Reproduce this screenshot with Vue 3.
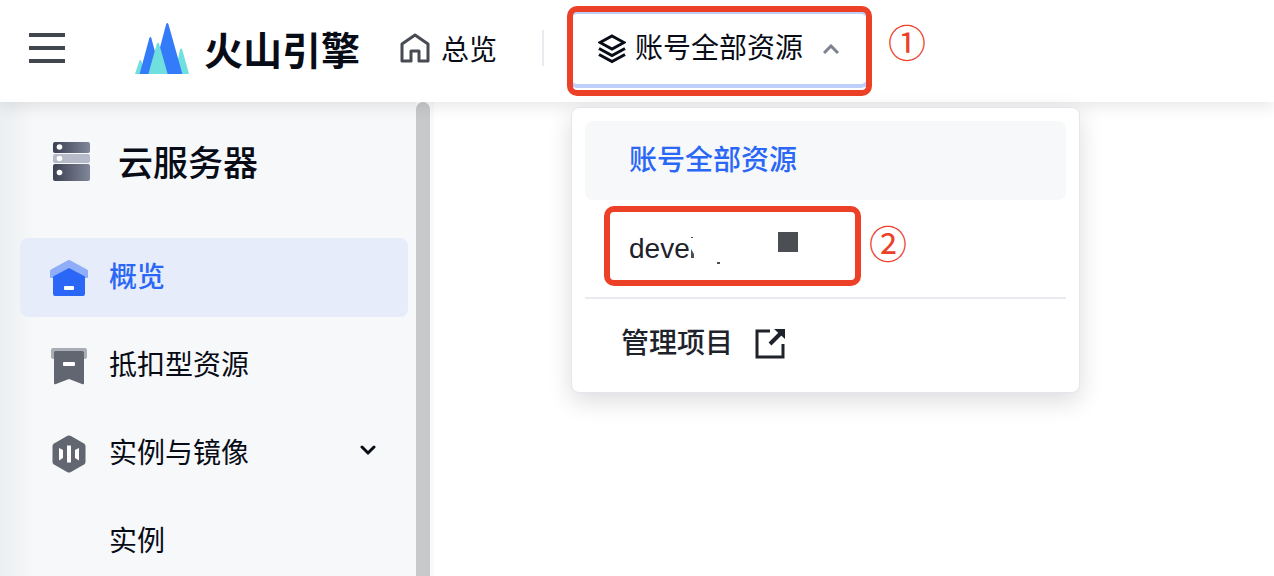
<script setup>
import { ref } from 'vue'

const menuOpen = ref(true)
const navItems = [
  { key: 'overview', label: '概览', icon: 'house', active: true },
  { key: 'deduct', label: '抵扣型资源', icon: 'bookmark' },
  { key: 'instances', label: '实例与镜像', icon: 'hexagon', expandable: true },
  { key: 'instance', label: '实例' },
]
</script>

<template>
  <div class="page">
    <header class="topbar">
      <button class="hamburger" type="button" aria-label="菜单">
        <svg width="36" height="30" viewBox="0 0 36 30">
          <path d="M0 2H36M0 15H36M0 28H36" stroke="#42464e" stroke-width="4" />
        </svg>
      </button>
      <a class="brand" href="#">
        <svg width="54" height="51" viewBox="0 0 54 51">
          <path d="M0 51L4.2 38.2Q5.3 36 6.4 38.2L10 51Z" fill="#70e0de" />
          <path d="M40 51L45 26.5Q46 24.4 47.2 26.5L54 51Z" fill="#70e0de" />
          <path d="M4.6 51L14.3 15.2Q15.3 12.6 16.4 15.2L26 51Z" fill="#347bfa" />
          <path d="M18 51L31.2 1Q32.3 -1 33.4 1L47.4 51Z" fill="#347bfa" />
          <path d="M13.4 51L21.8 20.8Q23 18.6 24.1 20.8L32.6 51Z" fill="#70e0de" />
        </svg>
        <span>火山引擎</span>
      </a>
      <a class="home" href="#">
        <svg width="30" height="30" viewBox="0 0 30 30" fill="none" stroke="#484b53" stroke-width="3" stroke-linejoin="round">
          <path d="M2 11L15 2L28 11V28H19V18H11V28H2Z" />
        </svg>
        <span>总览</span>
      </a>
      <span class="separator"></span>
      <div class="picker">
        <button class="picker-button" type="button" :aria-expanded="menuOpen" @click="menuOpen = !menuOpen">
          <svg width="28" height="30" viewBox="0 0 28 30" fill="none" stroke="#080c16" stroke-width="3">
            <path d="M14 2L26 8.5L14 15L2 8.5Z" />
            <path d="M1 14.5L14 21.5L27 14.5M1 20.5L14 27.5L27 20.5" />
          </svg>
          <span class="picker-label">账号全部资源</span>
          <svg class="caret" width="16" height="10" viewBox="0 0 16 10" fill="none" stroke="#7c828f" stroke-width="3">
            <path d="M1 9L8 2L15 9" />
          </svg>
        </button>
        <span class="mark mark-picker"></span>
        <span class="number number-one">①</span>
        <div v-if="menuOpen" class="menu">
          <button class="option selected" type="button">账号全部资源</button>
          <button class="option project" type="button">
            <span>deve</span>
            <svg width="110" height="40" viewBox="0 0 110 40">
              <path d="M1 8H3V9H1ZM1 20L4 25V29H1ZM27 33H30V35H27Z" fill="#4b4f56" />
              <path d="M88 3H108V23H88Z" fill="#4b4f54" />
            </svg>
            <span class="mark mark-project"></span>
            <span class="number number-two">②</span>
          </button>
          <hr class="rule" />
          <a class="manage" href="#">
            <span>管理项目</span>
            <svg width="32" height="32" viewBox="0 0 32 32" fill="none" stroke="#1e222b" stroke-width="4">
              <path d="M16 3H3V29H29V16" stroke-width="3" />
              <path d="M16 16L27 5" />
              <path d="M20 1H31V11Z" fill="#1e222b" stroke="none" />
            </svg>
          </a>
        </div>
      </div>
    </header>

    <div class="body">
      <aside class="sidebar">
        <h1 class="service">
          <svg width="38" height="40" viewBox="0 0 38 40">
            <defs>
              <linearGradient id="rack" x1="0" x2="1" y1="0" y2="0">
                <stop offset="0" stop-color="#3c4152" />
                <stop offset="1" stop-color="#808798" />
              </linearGradient>
            </defs>
            <rect x="0" y="1" width="37" height="11" rx="2" fill="url(#rack)" />
            <rect x="0" y="13" width="37" height="9" rx="2" fill="#b5bbc9" />
            <rect x="0" y="23" width="37" height="17" rx="2" fill="url(#rack)" />
            <circle cx="6.5" cy="6" r="2.8" fill="#fff" />
            <circle cx="6.5" cy="17.5" r="2.8" fill="#fff" />
            <circle cx="6.5" cy="31.5" r="2.8" fill="#fff" />
          </svg>
          <span>云服务器</span>
        </h1>
        <nav class="nav">
          <a v-for="item in navItems" :key="item.key" href="#" class="nav-item" :class="{ active: item.active }">
            <span class="nav-icon">
              <svg v-if="item.icon === 'house'" width="38" height="38" viewBox="0 0 38 38">
                <path d="M0 12Q0 11 1 10.500L17.500 1.500Q19 .5 20.500 1.500L37 10.500Q38 11 38 12V18Q38 19 37 19H1Q0 19 0 18Z" fill="#8fadf8" />
                <path d="M3 17.500L19 9L35 17.500V34.500Q35 37 33 37H5Q3 37 3 34.500Z" fill="#2a67f6" />
                <rect x="14" y="27" width="10" height="4" rx="1" fill="#fff" />
              </svg>
              <svg v-else-if="item.icon === 'bookmark'" width="38" height="38" viewBox="0 0 38 38">
                <rect x="1" y="1" width="36" height="11" rx="2" fill="#a9aeb6" />
                <path d="M4 5.500Q4 4 5.500 4H32.500Q34 4 34 5.500V36Q34 38 32 37L19 32L6 37Q4 38 4 36Z" fill="#616670" />
                <rect x="13" y="15" width="12" height="4" rx="1" fill="#fff" />
              </svg>
              <svg v-else-if="item.icon === 'hexagon'" width="38" height="38" viewBox="0 0 38 38">
                <path d="M17.500 .8Q19 0 20.500 .8L34 8.500Q35.500 9.500 35.500 11V27Q35.500 28.500 34 29.500L20.500 37.200Q19 38 17.500 37.200L4 29.500Q2.500 28.500 2.500 27V11Q2.500 9.500 4 8.500Z" fill="#616670" />
                <path d="M17 10.500H21V27.500H17ZM9 13L13 15V23L9 25.500ZM29 13L25 15V23L29 25.500Z" fill="#fff" />
              </svg>
            </span>
            <span class="nav-label">{{ item.label }}</span>
            <svg v-if="item.expandable" class="chevron" width="16" height="20" viewBox="0 0 16 20" fill="none" stroke="#080c16" stroke-width="3" stroke-linecap="round">
              <path d="M2 3L8 9L14 3" />
            </svg>
          </a>
        </nav>
      </aside>
      <div class="scrollbar"></div>
      <main class="content"></main>
    </div>
  </div>
</template>

<style>
body {
  margin: 0;
}
</style>

<style scoped>
.page {
  display: flex;
  flex-direction: column;
  height: 100vh;
  overflow: hidden;
  background: #fff;
  color: #080c16;
  font-family: "Liberation Sans", "Noto Sans CJK SC", sans-serif;
  font-size: 28px;
  line-height: 40px;
}
.page * {
  box-sizing: border-box;
}
svg {
  display: block;
  flex: none;
}
a {
  color: inherit;
  text-decoration: none;
}
button {
  border: 0;
  padding: 0;
  background: none;
  color: inherit;
  font: inherit;
  text-align: left;
}
.topbar {
  position: relative;
  z-index: 2;
  display: flex;
  align-items: center;
  flex: none;
  height: 102px;
  padding: 0 29px 6px;
  background: #fff;
  box-shadow: 0 4px 16px rgba(0, 0, 0, 0.1);
  white-space: nowrap;
}
.brand,
.home,
.service {
  font-family: "Noto Sans CJK SC", sans-serif;
}
.brand {
  display: flex;
  align-items: center;
  gap: 15px;
  margin-left: 70px;
  font-size: 39px;
  font-weight: 700;
}
.home {
  display: flex;
  align-items: center;
  gap: 11px;
  margin-left: 40px;
}
.separator {
  width: 2px;
  height: 36px;
  margin-left: 45px;
  background: #e9ebf1;
}
.picker {
  position: relative;
  margin: 2px 0 0 23px;
}
.picker-button {
  display: flex;
  align-items: center;
  height: 78px;
  width: 304px;
  padding: 0 28px 0 27px;
  border: 4px solid #bfcffb;
  border-radius: 10px;
}
.picker-label {
  margin-left: 9px;
}
.caret {
  margin-left: auto;
}
.mark {
  position: absolute;
  border: 6px solid #ec4027;
  border-radius: 10px;
  pointer-events: none;
}
.mark-picker {
  inset: -4px -1px -8px 0;
}
.number {
  position: absolute;
  color: #ec4027;
  font-family: "Noto Sans CJK SC", sans-serif;
  font-size: 38px;
  font-weight: 400;
  line-height: 40px;
}
.number-one {
  left: 321px;
  top: 11px;
}
.menu {
  position: absolute;
  top: 97px;
  left: 4px;
  width: 509px;
  height: 286px;
  padding: 13px;
  border: 1px solid #e3e6ec;
  border-radius: 8px;
  background: #fff;
  box-shadow: 0 8px 24px rgba(0, 0, 0, 0.14);
}
.option {
  position: relative;
  display: flex;
  align-items: center;
  width: 100%;
  height: 79px;
  padding: 0 44px;
  border-radius: 8px;
}
.selected {
  background: #f7f8fa;
  color: #2a67f6;
  font-weight: 500;
}
.project {
  height: 97px;
  color: #1e222b;
}
.mark-project {
  left: 19px;
  top: 6px;
  width: 257px;
  height: 80px;
}
.number-two {
  left: 284px;
  top: 22px;
}
.rule {
  height: 2px;
  margin: 0;
  border: 0;
  background: #e9ebf1;
}
.manage {
  display: flex;
  align-items: center;
  gap: 21px;
  height: 90px;
  padding: 0 36px;
  color: #1e222b;
  font-weight: 500;
}
.body {
  display: flex;
  flex: 1;
  min-height: 0;
}
.sidebar {
  width: 416px;
  padding: 39px 8px 0 20px;
  background: linear-gradient(90deg, #ebeff1, #f7f8fa 36px);
}
.service {
  display: flex;
  align-items: center;
  gap: 27px;
  height: 40px;
  margin: 0 0 57px;
  padding-left: 33px;
  font-size: 35px;
  font-weight: 500;
}
.nav {
  display: flex;
  flex-direction: column;
  gap: 9px;
}
.nav-item {
  display: flex;
  align-items: center;
  flex: none;
  height: 79px;
  padding: 0 32px 0 30px;
  border-radius: 8px;
}
.nav-item.active {
  background: #e6ecf9;
  color: #2a67f6;
  font-weight: 500;
}
.nav-icon {
  width: 38px;
  margin-right: 21px;
}
.chevron {
  margin-left: auto;
}
.scrollbar {
  width: 14px;
  border-radius: 7px 7px 0 0;
  background: #c8c9cb;
}
.content {
  flex: 1;
  border-left: 4px solid #fafafa;
}
</style>
